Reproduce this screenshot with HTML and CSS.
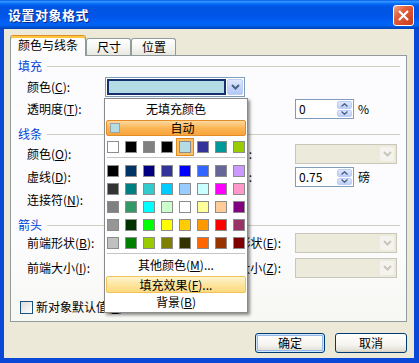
FILE: index.html
```html
<!DOCTYPE html>
<html lang="zh-CN">
<head>
    <meta charset="UTF-8">
    <title>设置对象格式</title>
    <link rel="stylesheet" href="styles.css">
</head>
<body>
    <svg class="defs" width="0" height="0">
        <symbol id="chev" viewBox="0 0 9 6"><path d="M1 1L4.5 4.5L8 1" fill="none" stroke="currentColor" stroke-width="2"/></symbol>
        <symbol id="up" viewBox="0 0 7 4"><path d="M0.5 3.5L3.5 0.8L6.5 3.5" fill="none" stroke="currentColor" stroke-width="1.4"/></symbol>
        <symbol id="down" viewBox="0 0 7 4"><path d="M0.5 0.5L3.5 3.2L6.5 0.5" fill="none" stroke="currentColor" stroke-width="1.4"/></symbol>
    </svg>

    <div class="window">
        <div class="titlebar">
            <span class="title">设置对象格式</span>
            <button class="close">
                <svg width="13" height="13" viewBox="0 0 13 13"><path d="M2 2L11 11M11 2L2 11" stroke="#fff" stroke-width="2.2"/></svg>
            </button>
        </div>

        <div class="client">
            <div class="tabs">
                <div class="tab on">颜色与线条</div>
                <div class="tab">尺寸</div>
                <div class="tab">位置</div>
            </div>

            <div class="panel">
                <!-- 填充 -->
                <div class="group">填充</div>
                <div class="row r1">
                    <span class="lbl">颜色(<u>C</u>):</span>
                    <div class="combo">
                        <span class="cur"></span>
                        <span class="drop"><svg><use href="#chev"/></svg></span>
                    </div>
                </div>
                <div class="row r2">
                    <span class="lbl">透明度(<u>T</u>):</span>
                    <div class="slider"><span class="track"></span></div>
                    <div class="rc">
                        <div class="spin">
                            <span class="val">0</span>
                            <span class="btns">
                                <span class="sb"><svg><use href="#up"/></svg></span>
                                <span class="sb"><svg><use href="#down"/></svg></span>
                            </span>
                        </div>
                        <span class="unit">%</span>
                    </div>
                </div>

                <!-- 线条 -->
                <div class="group g2">线条</div>
                <div class="row r3">
                    <span class="lbl">颜色(<u>O</u>):</span>
                    <div class="combo left"><span class="cur plain"></span><span class="drop"><svg><use href="#chev"/></svg></span></div>
                    <span class="rlbl line">线型(<u>S</u>):</span>
                    <div class="rc">
                        <div class="combo off"><span class="cur plain"></span><span class="drop"><svg><use href="#chev"/></svg></span></div>
                    </div>
                </div>
                <div class="row r4">
                    <span class="lbl">虚线(<u>D</u>):</span>
                    <div class="combo left"><span class="cur plain"></span><span class="drop"><svg><use href="#chev"/></svg></span></div>
                    <span class="rlbl line">粗细(<u>W</u>):</span>
                    <div class="rc">
                        <div class="spin">
                            <span class="val">0.75</span>
                            <span class="btns">
                                <span class="sb"><svg><use href="#up"/></svg></span>
                                <span class="sb"><svg><use href="#down"/></svg></span>
                            </span>
                        </div>
                        <span class="unit">磅</span>
                    </div>
                </div>
                <div class="row r5">
                    <span class="lbl">连接符(<u>N</u>):</span>
                    <div class="combo"><span class="cur plain"></span><span class="drop"><svg><use href="#chev"/></svg></span></div>
                </div>

                <!-- 箭头 -->
                <div class="group g3">箭头</div>
                <div class="row r6">
                    <span class="lbl">前端形状(<u>B</u>):</span>
                    <div class="combo left"><span class="cur plain"></span><span class="drop"><svg><use href="#chev"/></svg></span></div>
                    <span class="rlbl">后端形状(<u>E</u>):</span>
                    <div class="rc">
                        <div class="combo off"><span class="cur plain"></span><span class="drop"><svg><use href="#chev"/></svg></span></div>
                    </div>
                </div>
                <div class="row r7">
                    <span class="lbl">前端大小(<u>I</u>):</span>
                    <div class="combo left"><span class="cur plain"></span><span class="drop"><svg><use href="#chev"/></svg></span></div>
                    <span class="rlbl">后端大小(<u>Z</u>):</span>
                    <div class="rc">
                        <div class="combo off"><span class="cur plain"></span><span class="drop"><svg><use href="#chev"/></svg></span></div>
                    </div>
                </div>

                <div class="check">
                    <span class="box"></span>
                    <span>新对象默认值(<u>F</u>)</span>
                </div>
            </div>

            <div class="actions">
                <button class="btn def">确定</button>
                <button class="btn">取消</button>
            </div>
        </div>

        <!-- 颜色下拉面板 -->
        <div class="popup">
            <div class="pitem">无填充颜色</div>
            <div class="auto"><i class="mini"></i><span>自动</span></div>
            <div class="swatches recent">
                <i class="sw" style="background:#ffffff"></i>
                <i class="sw" style="background:#000000"></i>
                <i class="sw" style="background:#808080"></i>
                <i class="sw" style="background:#000000"></i>
                <i class="sw sel" style="background:#b4dce4"></i>
                <i class="sw" style="background:#333399"></i>
                <i class="sw" style="background:#009999"></i>
                <i class="sw" style="background:#99cc00"></i>
            </div>
            <div class="sep"></div>
            <div class="swatches palette">
                <i class="sw" style="background:#000000"></i>
                <i class="sw" style="background:#003366"></i>
                <i class="sw" style="background:#000080"></i>
                <i class="sw" style="background:#333399"></i>
                <i class="sw" style="background:#0000ff"></i>
                <i class="sw" style="background:#3366ff"></i>
                <i class="sw" style="background:#666699"></i>
                <i class="sw" style="background:#cc99ff"></i>

                <i class="sw" style="background:#333333"></i>
                <i class="sw" style="background:#008080"></i>
                <i class="sw" style="background:#33cccc"></i>
                <i class="sw" style="background:#00ccff"></i>
                <i class="sw" style="background:#99ccff"></i>
                <i class="sw" style="background:#ccffff"></i>
                <i class="sw" style="background:#ff00ff"></i>
                <i class="sw" style="background:#ff99cc"></i>

                <i class="sw" style="background:#808080"></i>
                <i class="sw" style="background:#339966"></i>
                <i class="sw" style="background:#00ffff"></i>
                <i class="sw" style="background:#ccffcc"></i>
                <i class="sw" style="background:#ffffff"></i>
                <i class="sw" style="background:#ffff99"></i>
                <i class="sw" style="background:#ffcc99"></i>
                <i class="sw" style="background:#800080"></i>

                <i class="sw" style="background:#969696"></i>
                <i class="sw" style="background:#003300"></i>
                <i class="sw" style="background:#00ff00"></i>
                <i class="sw" style="background:#ffff00"></i>
                <i class="sw" style="background:#ffcc00"></i>
                <i class="sw" style="background:#ff9900"></i>
                <i class="sw" style="background:#ff0000"></i>
                <i class="sw" style="background:#993366"></i>

                <i class="sw" style="background:#c0c0c0"></i>
                <i class="sw" style="background:#008000"></i>
                <i class="sw" style="background:#99cc00"></i>
                <i class="sw" style="background:#808000"></i>
                <i class="sw" style="background:#333300"></i>
                <i class="sw" style="background:#ff6600"></i>
                <i class="sw" style="background:#993300"></i>
                <i class="sw" style="background:#800000"></i>
            </div>
            <div class="sep s2"></div>
            <div class="pitem more">其他颜色(<u>M</u>)...</div>
            <div class="pitem hot">填充效果(<u>F</u>)...</div>
            <div class="pitem last">背景(<u>B</u>)</div>
        </div>
    </div>
</body>
</html>
```

FILE: styles.css
```css
*{ margin: 0; padding: 0; box-sizing: border-box;}
body{ width: 419px; height: 363px; overflow: hidden; font: 12px/20px "Noto Sans CJK SC", sans-serif; color: #000; background: #0a49d8;}
u{ text-decoration: underline;}
i{ display: block;}
.defs{ position: absolute; width: 0; height: 0;}

/* 창 틀 */
.window{ position: relative; width: 419px; height: 363px; display: flex; flex-direction: column; background: #0a49d8;}
.titlebar{ height: 29px; flex: none; display: flex; align-items: center; justify-content: space-between; padding: 0 5px 0 8px;
    background: linear-gradient(#0058ee 0%, #3593ff 5%, #1a84ff 9%, #0569f5 14%, #0057e5 22%, #0054e3 40%, #0056eb 60%, #0262f8 78%, #0060ef 88%, #0050d0 94%, #0040b0 100%);}
.titlebar .title{ color: #fff; font-size: 13px; font-weight: bold; text-shadow: 1px 1px 0 #0a2a8a; letter-spacing: 0.5px;}
.titlebar .close{ width: 21px; height: 21px; margin-top: 1px; border: 1px solid #fff; border-radius: 3px; display: flex; align-items: center; justify-content: center;
    background: linear-gradient(135deg, #f0a58a 0%, #e2603e 35%, #d44a2a 70%, #c23e1e 100%);}
.titlebar .close svg{ display: block;}

.client{ flex: 1; margin: 0 5px 5px 4px; padding: 6px 7px 5px 6px; background: #ece9d8; display: flex; flex-direction: column;}

/* 탭 */
.tabs{ height: 20px; flex: none; display: flex; align-items: flex-end;}
.tab{ height: 17px; line-height: 15px; padding: 0 9px 0 10px; border: 1px solid #919b9c; border-bottom: none; border-radius: 3px 3px 0 0; background: linear-gradient(#ffffff, #f3f3ef 60%, #e8e7e0);}
.tab.on{ position: relative; z-index: 1; height: 21px; margin-bottom: -1px; padding: 1px 7px 0; line-height: 16px; border-top: 1px solid #e68b2c; background: #fcfcfe; box-shadow: inset 0 2px 0 #ffc83c;}

.panel{ flex: 1; border: 1px solid #919b9c; background: linear-gradient(#fcfcfe 70%, #f7f7f3); padding: 3px 6px 0 7px;}

.group{ display: flex; align-items: center; height: 14px; line-height: 14px; color: #0046d5;}
.group::after{ content: ""; flex: 1; height: 1px; margin-left: 5px; background: #d0d0bf;}
.group.g2, .group.g3{ margin-top: 8px;}

.row{ display: flex; align-items: center; height: 20px; margin: 3px 3px 0 9px;}
.row.r1{ margin-top: 4px;}
.row.r2{ margin-top: 2px;}
.row.r2 .rc{ margin-left: auto;}
.row.r6{ margin-top: 1px;}
.row.r7{ margin-top: 5px;}
.row .lbl{ width: 78px; flex: none; white-space: nowrap;}
.row .rlbl{ margin-left: auto; margin-right: 14px; white-space: nowrap; flex: none;}
.row .rlbl.line{ margin-right: 43px;}
.row .rc{ width: 102px; flex: none; display: flex; align-items: center;}

/* 콤보박스 */
.combo{ width: 140px; height: 20px; display: flex; padding: 1px; border: 1px solid #7f9db9; background: #fff;}
.combo.left{ flex-shrink: 1; min-width: 0; margin-right: 4px;}
.combo .cur{ flex: 1; border: 2px solid #14306e; background: #b4dce4;}
.combo .cur.plain{ border: none; background: transparent;}
.combo .drop{ width: 16px; flex: none; margin-left: 1px; display: flex; align-items: center; justify-content: center; color: #4d6185;
    border: 1px solid #bccdf6; border-radius: 2px; background: linear-gradient(#dfe8fd, #c6d6fb 50%, #b3c6f6);}
.combo .drop svg{ width: 9px; height: 6px;}
.combo.off{ width: 102px; border-color: #c9c7ba; background: #ebeadb;}
.combo.off .drop{ color: #c9c7ba; border-color: #ebeadb; background: #f4f3ee;}

.slider{ width: 130px; height: 20px; display: flex; align-items: center;}
.slider .track{ width: 100%; height: 3px; border: 1px solid #b0aea0; background: #f1f1ec;}

/* 스핀 */
.spin{ width: 59px; height: 20px; display: flex; border: 1px solid #7f9db9; background: #fff;}
.spin .val{ flex: 1; padding-left: 3px; line-height: 18px;}
.spin .btns{ width: 16px; display: flex; flex-direction: column; gap: 1px; padding: 1px 1px 1px 0;}
.spin .sb{ flex: 1; display: flex; align-items: center; justify-content: center; color: #4d6185; border: 1px solid #bccdf6; border-radius: 2px; background: linear-gradient(#dfe8fd, #bccff9);}
.spin .sb svg{ width: 7px; height: 4px;}
.unit{ margin-left: 4px;}

.check{ display: flex; align-items: center; height: 14px; margin: 22px 0 0 2px;}
.check .box{ width: 13px; height: 13px; margin-right: 3px; border: 1px solid #1c5180; background: linear-gradient(135deg, #dcdcd7, #fff);}

/* 버튼 */
.actions{ flex: none; display: flex; justify-content: flex-end; gap: 10px; margin-top: 11px;}
.btn{ width: 72px; height: 20px; font: inherit; line-height: 18px; border: 1px solid #003c74; border-radius: 3px; background: linear-gradient(#ffffff, #f5f4f0 60%, #e3e0d6 90%, #d6d0c5);}
.btn.def{ width: 70px; box-shadow: inset 0 0 0 1px #cee7ff, inset 0 0 0 2px #98b8ea;}

/* 색상 팝업 */
.popup{ position: absolute; left: 104px; top: 98px; width: 144px; padding-bottom: 1px; border: 1px solid #8a8a8a; background: #fff; box-shadow: 2px 2px 3px rgba(0, 0, 0, 0.45); display: flex; flex-direction: column;}
.popup .pitem{ height: 20px; line-height: 20px; text-align: center; margin: 0 1px;}
.popup .auto{ height: 16px; margin: 1px 1px 0; padding-left: 3px; display: flex; align-items: center; border: 1px solid #e28d2a; border-radius: 2px; background: linear-gradient(#fdd89e, #fbb655 50%, #f8a43a);}
.popup .auto .mini{ width: 10px; height: 10px; border: 1px solid #9aa4a6; background: #b4dce4;}
.popup .auto span{ flex: 1; text-align: center; line-height: 14px;}
.popup .swatches{ display: grid; grid-template-columns: repeat(8, 12px); column-gap: 6px; row-gap: 6px; margin-left: -1px; padding-left: 3px;}
.popup .recent{ margin-top: 5px;}
.popup .palette{ margin-top: 7px;}
.popup .sw{ width: 12px; height: 12px; border: 1px solid #8c8c8c;}
.popup .sw.sel{ box-shadow: 0 0 0 2px #fcc168, 0 0 0 3px #e38a1c;}
.popup .sep{ height: 1px; margin: 4px 2px 0; background: #c5c5c5;}
.popup .more{ margin-top: 1px;}
.popup .hot{ height: 17px; line-height: 15px; margin-top: 1px; border: 1px solid #f0c35a; border-radius: 2px; background: linear-gradient(#fff4cf, #fde59f 50%, #fcd97f);}
.popup .last{ height: 18px; line-height: 18px;}
```
